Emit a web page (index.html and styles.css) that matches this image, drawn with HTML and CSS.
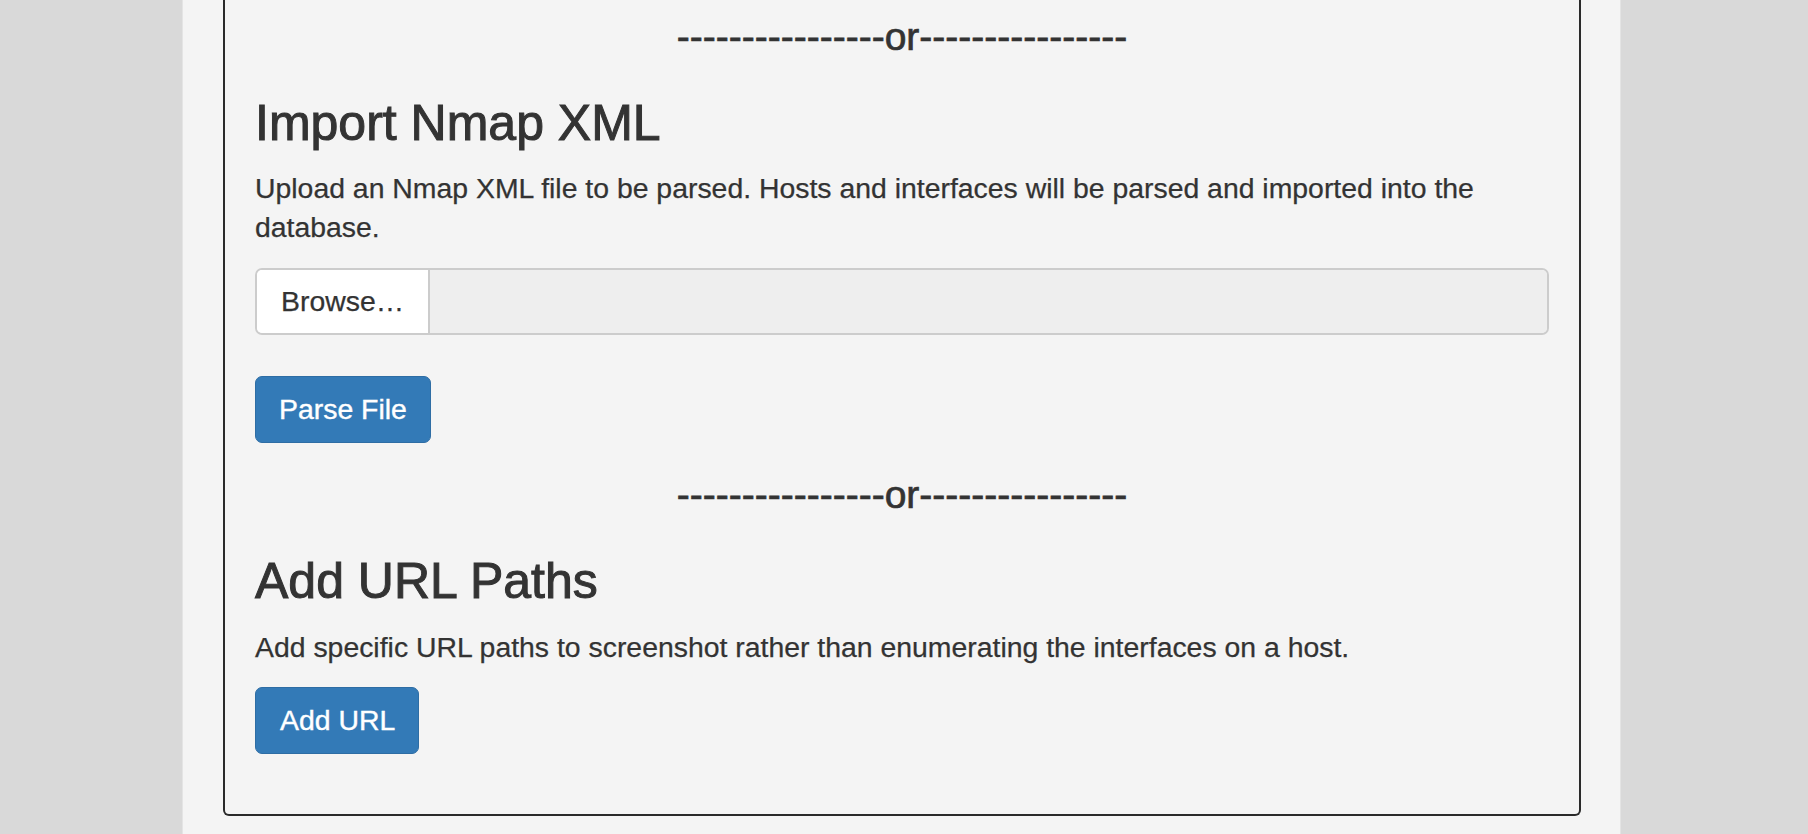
FILE: index.html
```html
<!DOCTYPE html>
<html lang="en">
<head>
<meta charset="utf-8">
<title>Import</title>
<link rel="stylesheet" href="styles.css">
</head>
<body>
<div class="page">
  <main class="container">
    <section class="card">
      <h3 class="divider divider-first">----------------or----------------</h3>
      <h2 class="title">Import Nmap XML</h2>
      <p class="text text-import">Upload an Nmap XML file to be parsed. Hosts and interfaces will be parsed and imported into the database.</p>
      <div class="file-input">
        <span class="browse">Browse…</span>
        <span class="file-name"></span>
      </div>
      <button class="btn btn-parse" type="button">Parse File</button>
      <h3 class="divider divider-second">----------------or----------------</h3>
      <h2 class="title">Add URL Paths</h2>
      <p class="text text-url">Add specific URL paths to screenshot rather than enumerating the interfaces on a host.</p>
      <button class="btn btn-add" type="button">Add URL</button>
    </section>
  </main>
</div>
</body>
</html>
```

FILE: styles.css
```css
* {
  box-sizing: border-box;
}

html, body {
  margin: 0;
  padding: 0;
}

body {
  background: #d9d9d9;
  font-family: "Liberation Sans", Arial, Helvetica, sans-serif;
  color: #333333;
}

.page {
  display: flex;
  padding: 0 188px 0 183px;
  min-height: 100vh;
}

.container {
  flex: 1;
  background: #f4f4f4;
  padding: 0 39px 19px 40px;
  box-shadow: -1px 0 0 #e4e4e4, 1px 0 0 #e4e4e4;
}

.card {
  display: flex;
  flex-direction: column;
  border: 2px solid #2a2a2a;
  border-top: 0;
  border-radius: 0 0 6px 6px;
  padding: 15px 30px 60px 30px;
}

.divider {
  margin: 0 0 38px 0;
  font-size: 39px;
  line-height: 43px;
  font-weight: 400;
  text-align: center;
  -webkit-text-stroke: 0.7px #333333;
}

.divider-second {
  margin-top: 2px;
}

.title {
  margin: 0 0 19px 0;
  font-size: 50px;
  line-height: 54px;
  font-weight: 400;
  -webkit-text-stroke: 1px #333333;
}

.text {
  margin: 0;
  font-size: 28.4px;
  line-height: 39px;
  -webkit-text-stroke: 0.25px #333333;
}

.text-import {
  margin-bottom: 21px;
}

.text-url {
  margin-top: 1px;
  margin-bottom: 20px;
}

.file-input {
  display: flex;
  height: 67px;
  border: 2px solid #cccccc;
  border-radius: 7px;
  overflow: hidden;
  margin-bottom: 41px;
}

.browse {
  display: flex;
  align-items: center;
  padding: 0 24px 0 24px;
  background: #ffffff;
  border-right: 2px solid #cccccc;
  font-size: 28.4px;
  line-height: 39px;
  -webkit-text-stroke: 0.25px #333333;
}

.file-name {
  flex: 1;
  background: #eeeeee;
}

.btn {
  align-self: flex-start;
  height: 67px;
  padding: 0 23px;
  margin: 0;
  border: 1px solid #2e6da4;
  border-radius: 7px;
  background: #337ab7;
  color: #ffffff;
  font-family: "Liberation Sans", Arial, Helvetica, sans-serif;
  font-size: 28.4px;
  line-height: 39px;
  -webkit-text-stroke: 0.4px #ffffff;
  cursor: pointer;
}

.btn-add {
  padding: 0 23px 0 24px;
}

.btn-parse {
  margin-bottom: 28px;
}
```
